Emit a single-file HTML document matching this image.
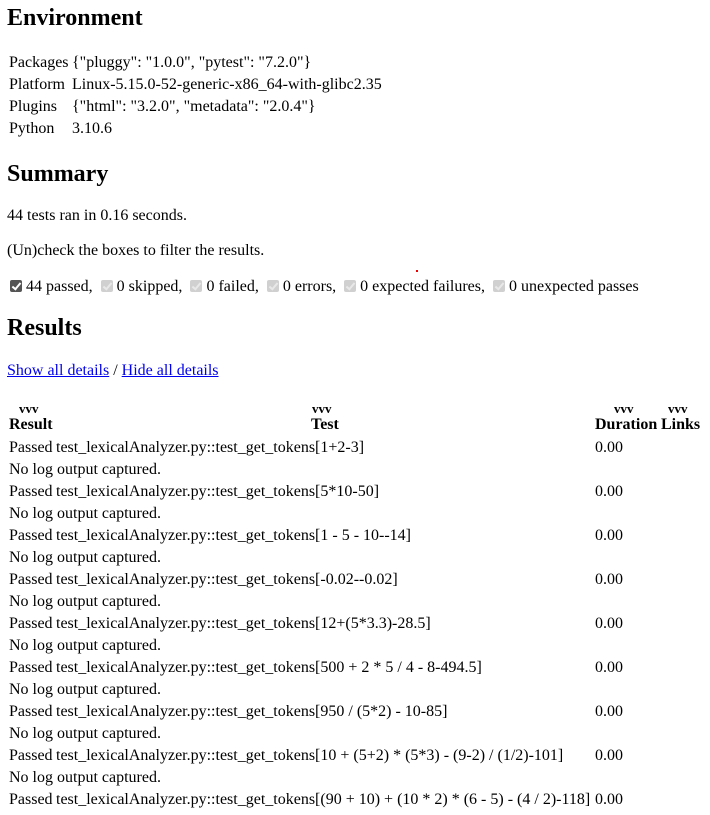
<!DOCTYPE html>
<html><head><meta charset="utf-8"><style>
body{margin:0;width:710px;height:814px;background:#fff;font-family:"Liberation Serif",serif;font-size:16px;color:#000;position:relative;top:1px;overflow:hidden}
.a{position:absolute;white-space:nowrap;line-height:20px}
h2{position:absolute;margin:0;font-size:24px;font-weight:bold;line-height:28px;white-space:nowrap}
a{color:#00e}
.cb{display:inline-block;width:12px;height:12px;border-radius:2px;background:#d0d0d0;vertical-align:-1px;margin-right:4px;position:relative}
.cb.on{background:#555}
.cb::after{content:"";position:absolute;left:4px;top:1px;width:3px;height:7px;border:solid #fff;border-width:0 2px 2px 0;transform:rotate(40deg)}
.cb.off::after{border-color:#e8e8e8}
b.v{font-size:13px;position:absolute;line-height:13px}
.hd{font-weight:bold}
</style></head><body>
<h2 style="left:7px;top:3px">Environment</h2>
<div class="a" style="left:9px;top:52px">Packages</div><div class="a" style="left:72px;top:52px">{"pluggy": "1.0.0", "pytest": "7.2.0"}</div>
<div class="a" style="left:9px;top:74px">Platform</div><div class="a" style="left:72px;top:74px">Linux-5.15.0-52-generic-x86_64-with-glibc2.35</div>
<div class="a" style="left:9px;top:96px">Plugins</div><div class="a" style="left:72px;top:96px">{"html": "3.2.0", "metadata": "2.0.4"}</div>
<div class="a" style="left:9px;top:118px">Python</div><div class="a" style="left:72px;top:118px">3.10.6</div>
<h2 style="left:7px;top:159px">Summary</h2>
<div class="a" style="left:7px;top:205px">44 tests ran in 0.16 seconds.</div>
<div class="a" style="left:7px;top:240px">(Un)check the boxes to filter the results.</div>
<div style="position:absolute;left:416px;top:269px;width:2px;height:2px;background:#e00"></div>
<div class="a" style="left:10px;top:276px"><span class="cb on"></span>44 passed, &nbsp;<span class="cb off"></span>0 skipped, &nbsp;<span class="cb off"></span>0 failed, &nbsp;<span class="cb off"></span>0 errors, &nbsp;<span class="cb off"></span>0 expected failures, &nbsp;<span class="cb off"></span>0 unexpected passes</div>
<h2 style="left:7px;top:313px">Results</h2>
<div class="a" style="left:7px;top:360px"><a href="#">Show all details</a> / <a href="#">Hide all details</a></div>
<b class="v" style="left:19px;top:401px">vvv</b><b class="v" style="left:312px;top:401px">vvv</b><b class="v" style="left:614px;top:401px">vvv</b><b class="v" style="left:668px;top:401px">vvv</b>
<div class="a hd" style="left:9px;top:414px">Result</div>
<div class="a hd" style="left:311px;top:414px">Test</div>
<div class="a hd" style="left:595px;top:414px">Duration</div>
<div class="a hd" style="left:661px;top:414px">Links</div>
<div class="a" style="left:9px;top:437px">Passed</div><div class="a" style="left:56px;top:437px">test_lexicalAnalyzer.py::test_get_tokens[1+2-3]</div><div class="a" style="left:595px;top:437px">0.00</div>
<div class="a" style="left:9px;top:459px">No log output captured.</div>
<div class="a" style="left:9px;top:481px">Passed</div><div class="a" style="left:56px;top:481px">test_lexicalAnalyzer.py::test_get_tokens[5*10-50]</div><div class="a" style="left:595px;top:481px">0.00</div>
<div class="a" style="left:9px;top:503px">No log output captured.</div>
<div class="a" style="left:9px;top:525px">Passed</div><div class="a" style="left:56px;top:525px">test_lexicalAnalyzer.py::test_get_tokens[1 - 5 - 10--14]</div><div class="a" style="left:595px;top:525px">0.00</div>
<div class="a" style="left:9px;top:547px">No log output captured.</div>
<div class="a" style="left:9px;top:569px">Passed</div><div class="a" style="left:56px;top:569px">test_lexicalAnalyzer.py::test_get_tokens[-0.02--0.02]</div><div class="a" style="left:595px;top:569px">0.00</div>
<div class="a" style="left:9px;top:591px">No log output captured.</div>
<div class="a" style="left:9px;top:613px">Passed</div><div class="a" style="left:56px;top:613px">test_lexicalAnalyzer.py::test_get_tokens[12+(5*3.3)-28.5]</div><div class="a" style="left:595px;top:613px">0.00</div>
<div class="a" style="left:9px;top:635px">No log output captured.</div>
<div class="a" style="left:9px;top:657px">Passed</div><div class="a" style="left:56px;top:657px">test_lexicalAnalyzer.py::test_get_tokens[500 + 2 * 5 / 4 - 8-494.5]</div><div class="a" style="left:595px;top:657px">0.00</div>
<div class="a" style="left:9px;top:679px">No log output captured.</div>
<div class="a" style="left:9px;top:701px">Passed</div><div class="a" style="left:56px;top:701px">test_lexicalAnalyzer.py::test_get_tokens[950 / (5*2) - 10-85]</div><div class="a" style="left:595px;top:701px">0.00</div>
<div class="a" style="left:9px;top:723px">No log output captured.</div>
<div class="a" style="left:9px;top:745px">Passed</div><div class="a" style="left:56px;top:745px">test_lexicalAnalyzer.py::test_get_tokens[10 + (5+2) * (5*3) - (9-2) / (1/2)-101]</div><div class="a" style="left:595px;top:745px">0.00</div>
<div class="a" style="left:9px;top:767px">No log output captured.</div>
<div class="a" style="left:9px;top:789px">Passed</div><div class="a" style="left:56px;top:789px">test_lexicalAnalyzer.py::test_get_tokens[(90 + 10) + (10 * 2) * (6 - 5) - (4 / 2)-118]</div><div class="a" style="left:595px;top:789px">0.00</div>
</body></html>
